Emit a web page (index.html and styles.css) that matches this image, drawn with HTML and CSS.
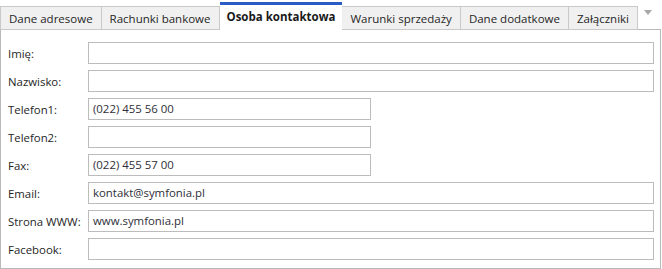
FILE: index.html
```html
<!DOCTYPE html>
<html lang="pl">
<head>
  <meta charset="UTF-8" />
  <title>Osoba kontaktowa</title>
  <link rel="stylesheet" href="styles.css">
</head>
<body>
  <div class="tabs">
    <div class="tab">Dane adresowe</div>
    <div class="tab">Rachunki bankowe</div>
    <div class="tab active">Osoba kontaktowa</div>
    <div class="tab">Warunki sprzedaży</div>
    <div class="tab">Dane dodatkowe</div>
    <div class="tab">Załączniki</div>
    <div class="tab-menu"><span class="arrow"></span></div>
  </div>

  <!-- Contact form -->
  <div class="panel">
    <div class="row"><label>Imię:</label><div class="field"></div></div>
    <div class="row"><label>Nazwisko:</label><div class="field"></div></div>
    <div class="row"><label>Telefon1:</label><div class="field short">(022) 455 56 00</div></div>
    <div class="row"><label>Telefon2:</label><div class="field short"></div></div>
    <div class="row"><label>Fax:</label><div class="field short">(022) 455 57 00</div></div>
    <div class="row"><label>Email:</label><div class="field">kontakt@symfonia.pl</div></div>
    <div class="row"><label>Strona WWW:</label><div class="field">www.symfonia.pl</div></div>
    <div class="row"><label>Facebook:</label><div class="field"></div></div>
  </div>
</body>
</html>
```

FILE: styles.css
```css
body {
  margin: 0;
  background-color: white;
  color: #262626;
  font-family: "Open Sans", "Noto Sans", sans-serif;
  font-size: 11.4px;
}

.tabs {
  display: flex;
  align-items: flex-end;
  height: 29px;
  width: 661px;
  box-sizing: border-box;
}

.tab {
  height: 24px;
  box-sizing: border-box;
  padding: 0 8px;
  font-size: 11.5px;
  line-height: 23px;
  background-color: #f0f0f0;
  border: 1px solid #c9c9c9;
  border-left: none;
  margin-bottom: -1px;
  white-space: nowrap;
}

.tab:first-child {
  border-left: 1px solid #c9c9c9;
}

.tab.active {
  height: 28px;
  padding: 0 7px;
  background-color: white;
  border: none;
  border-top: 3px solid #2a5cc6;
  font-weight: bold;
  line-height: 24px;
  color: #1a1a1a;
}

.tab-menu {
  flex: 1;
  height: 24px;
  display: flex;
  justify-content: flex-end;
  padding-right: 9px;
}

.arrow {
  margin-top: 5px;
  width: 0;
  height: 0;
  border-left: 4px solid transparent;
  border-right: 4px solid transparent;
  border-top: 5px solid #a8a8a8;
}

.panel {
  width: 661px;
  box-sizing: border-box;
  border: 1px solid #b9b9b9;
  padding: 12px 6px 8px 7px;
  display: flex;
  flex-direction: column;
  gap: 6px;
}

.row {
  display: flex;
  align-items: center;
  height: 22px;
}

.row label {
  width: 80px;
  flex-shrink: 0;
}

.field {
  width: 566px;
  height: 22px;
  box-sizing: border-box;
  border: 1px solid #bcbcbc;
  padding: 0 4px;
  line-height: 20px;
  color: #2e2e38;
}

.field.short {
  width: 283px;
}
```
